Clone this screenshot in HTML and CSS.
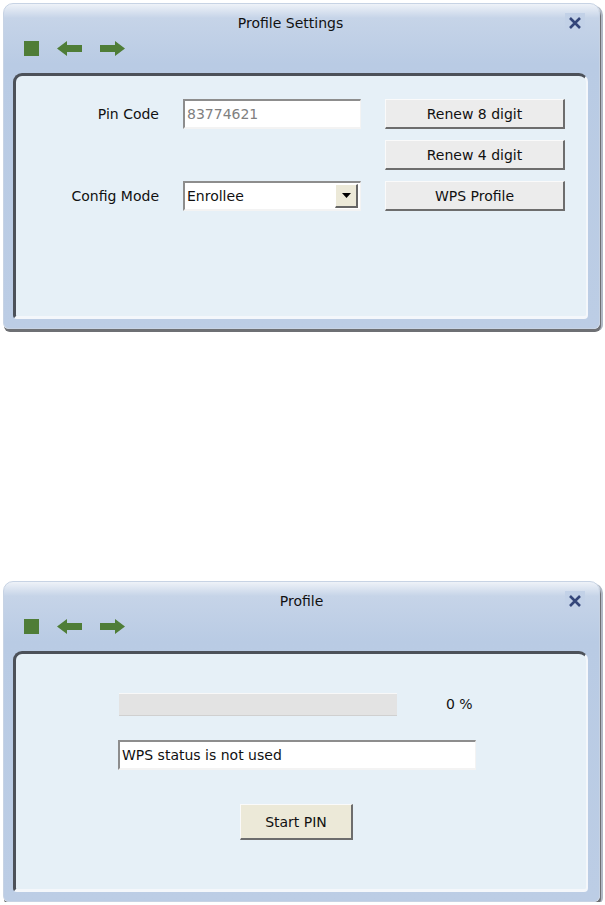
FILE: index.html
```html
<!DOCTYPE html>
<html lang="en">
<head>
  <meta charset="UTF-8" />
  <title>Profile Settings</title>
  <link rel="stylesheet" href="styles.css">
</head>
<body>
  <div class="window settings">
    <div class="titlebar">
      <span class="title">Profile Settings</span>
      <span class="close"><svg width="14" height="14" viewBox="0 0 14 14"><path d="M2 2 L12 12 M12 2 L2 12" stroke="#34467a" stroke-width="2.6"/></svg></span>
    </div>
    <div class="toolbar">
      <svg class="tool" width="16" height="16" viewBox="0 0 16 16"><rect x="0" y="0" width="15" height="15" fill="#4f7d37"/></svg>
      <svg class="tool" width="26" height="16" viewBox="0 0 26 16"><path d="M0 7.5 L10 0 L10 4 L25 4 L25 11 L10 11 L10 15 Z" fill="#4f7d37"/></svg>
      <svg class="tool" width="26" height="16" viewBox="0 0 26 16"><path d="M25 7.5 L15 0 L15 4 L0 4 L0 11 L15 11 L15 15 Z" fill="#4f7d37"/></svg>
    </div>
    <div class="panel">
      <div class="form">
        <label>Pin Code</label>
        <div class="field pin">83774621</div>
        <button class="btn">Renew 8 digit</button>

        <span></span>
        <span></span>
        <button class="btn">Renew 4 digit</button>

        <label>Config Mode</label>
        <div class="field select">
          <span>Enrollee</span>
          <span class="drop"><svg width="9" height="5" viewBox="0 0 9 5"><path d="M0 0 L9 0 L4.5 5 Z" fill="#000"/></svg></span>
        </div>
        <button class="btn">WPS Profile</button>
      </div>
    </div>
  </div>

  <div class="window profile">
    <div class="titlebar">
      <span class="title">Profile</span>
      <span class="close"><svg width="14" height="14" viewBox="0 0 14 14"><path d="M2 2 L12 12 M12 2 L2 12" stroke="#34467a" stroke-width="2.6"/></svg></span>
    </div>
    <div class="toolbar">
      <svg class="tool" width="16" height="16" viewBox="0 0 16 16"><rect x="0" y="0" width="15" height="15" fill="#4f7d37"/></svg>
      <svg class="tool" width="26" height="16" viewBox="0 0 26 16"><path d="M0 7.5 L10 0 L10 4 L25 4 L25 11 L10 11 L10 15 Z" fill="#4f7d37"/></svg>
      <svg class="tool" width="26" height="16" viewBox="0 0 26 16"><path d="M25 7.5 L15 0 L15 4 L0 4 L0 11 L15 11 L15 15 Z" fill="#4f7d37"/></svg>
    </div>
    <div class="panel">
      <div class="wps">
        <div class="progress-row">
          <div class="progress"></div>
          <span class="percent">0 %</span>
        </div>
        <div class="field status">WPS status is not used</div>
        <button class="btn start">Start PIN</button>
      </div>
    </div>
  </div>
</body>
</html>
```

FILE: styles.css
```css
body {
  margin: 0;
  background: #ffffff;
  font-family: Tahoma, "DejaVu Sans", sans-serif;
  font-size: 13px;
  color: #111;
}

.window {
  width: 597px;
  margin-left: 3px;
  box-sizing: border-box;
  border: 1px solid #c7d3e4;
  border-radius: 10px 10px 6px 6px;
  background: linear-gradient(#eef2f8 0px, #c6d4e8 14px, #b9cbe4 60px, #bccde5 100%);
  box-shadow: 1px 3px 0 #6e7074, 3px 2px 0 #b0b8c4;
  padding-bottom: 9px;
}

.settings {
  margin-top: 3px;
}

.profile {
  margin-top: 252px;
}

.titlebar {
  height: 36px;
  display: flex;
  align-items: center;
  justify-content: center;
  position: relative;
}

.title {
  font-size: 14px;
  color: #111;
  margin-top: 2px;
}

.settings .title {
  margin-right: 22px;
}

.close {
  position: absolute;
  right: 14px;
  top: 9px;
  width: 20px;
  height: 20px;
  background: #c2d1e7;
  display: flex;
  align-items: center;
  justify-content: center;
}

.close svg {
  display: block;
}

.toolbar {
  height: 32px;
  display: flex;
  align-items: flex-start;
  gap: 17px;
  padding-left: 20px;
  padding-top: 1px;
}

.tool {
  display: block;
}

.panel {
  margin: 0 11px 0 9px;
  background: #e6f0f7;
  border-top: 3px solid #4c5159;
  border-left: 3px solid #4c5159;
  border-right: 2px solid #f4f7fb;
  border-bottom: 3px solid #f4f7fb;
  border-radius: 9px 9px 4px 4px;
}

.settings .panel {
  height: 240px;
}

.profile .panel {
  height: 235px;
}

.form {
  display: grid;
  grid-template-columns: 143px 178px 180px;
  column-gap: 24px;
  row-gap: 11px;
  padding: 23px 0 0 0;
  align-items: center;
}

.form label {
  text-align: right;
  font-size: 14px;
}

.field {
  height: 30px;
  box-sizing: border-box;
  background: #fff;
  border-top: 2px solid #8d8d8d;
  border-left: 2px solid #8d8d8d;
  border-right: 1px solid #f3f3f3;
  border-bottom: 2px solid #f3f3f3;
  font-size: 14px;
  padding-left: 2px;
  display: flex;
  align-items: center;
}

.pin {
  color: #808080;
}

.select {
  justify-content: space-between;
  padding-right: 2px;
}

.drop {
  width: 20px;
  height: 21px;
  background: #ece9d8;
  border-top: 1px solid #fff;
  border-left: 1px solid #fff;
  border-right: 2px solid #666;
  border-bottom: 2px solid #666;
  display: flex;
  align-items: center;
  justify-content: center;
}

.drop svg {
  display: block;
}

.btn {
  height: 30px;
  width: 180px;
  box-sizing: border-box;
  font-family: inherit;
  font-size: 14px;
  color: #111;
  background: #ececec;
  border-top: 1px solid #fafafa;
  border-left: 1px solid #fafafa;
  border-right: 2px solid #6d6d6d;
  border-bottom: 2px solid #6d6d6d;
  padding: 0;
}

.wps {
  padding: 38px 0 0 103px;
}

.progress-row {
  display: flex;
  align-items: center;
  height: 24px;
}

.progress {
  width: 278px;
  height: 23px;
  background: #e3e3e3;
  border-top: 1px solid #f8f8f8;
  border-bottom: 1px solid #d0d0d0;
  box-sizing: border-box;
}

.percent {
  margin-left: 49px;
  font-size: 14px;
}

.status {
  width: 358px;
  margin-top: 24px;
  margin-left: -1px;
}

.start {
  display: block;
  width: 113px;
  height: 36px;
  margin: 34px 0 0 121px;
  background: #ece9d8;
}
```
